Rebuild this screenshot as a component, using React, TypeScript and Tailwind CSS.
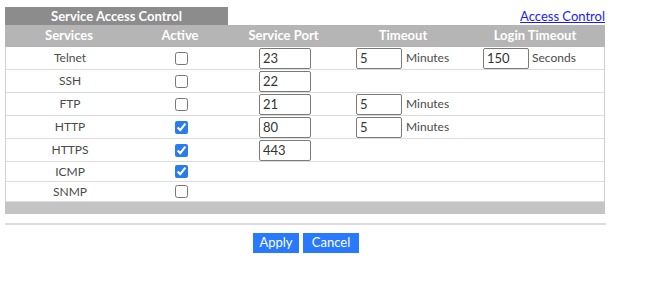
import React from "react";

type Row = {
  name: string;
  active: boolean;
  port?: string;
  timeout?: string;
  login?: string;
  tall: boolean;
};

const ROWS: Row[] = [
  { name: "Telnet", active: false, port: "23", timeout: "5", login: "150", tall: true },
  { name: "SSH", active: false, port: "22", tall: true },
  { name: "FTP", active: false, port: "21", timeout: "5", tall: true },
  { name: "HTTP", active: true, port: "80", timeout: "5", tall: true },
  { name: "HTTPS", active: true, port: "443", tall: true },
  { name: "ICMP", active: true, tall: false },
  { name: "SNMP", active: false, tall: false },
];

const cols = "grid grid-cols-[128px_94px_113px_126px_138px]";

function Field({ value, wide }: { value: string; wide?: boolean }) {
  return (
    <input
      defaultValue={value}
      className={`h-[21px] ${wide ? "w-[52px]" : "w-[46px]"} rounded-[2px] border border-[#7a7a7a] bg-white px-[3px] text-[13px] text-[#333] outline-none`}
    />
  );
}

export default function App() {
  return (
    <div className="w-[645px] h-[284px] bg-white font-['Lato','DejaVu_Sans',sans-serif] text-[12px] text-[#4a4a4a]">
      <div className="ml-[5px] w-[600px] pt-[7px]">
        <div className="flex items-end justify-between">
          <div className="h-[18px] w-[223px] bg-[#8c8c8c] text-center text-[13px] font-bold leading-[18px] text-white">
            Service Access Control
          </div>
          <a href="#" className="mb-[2px] text-[13px] leading-[14px] text-[#1a1aff] underline">
            Access Control
          </a>
        </div>
        <div className={`${cols} h-[22px] items-center bg-[#b5b5b5] text-[13px] font-bold text-white`}>
          <div className="text-center">Services</div>
          <div className="text-center">Active</div>
          <div className="text-center">Service Port</div>
          <div className="text-center">Timeout</div>
          <div className="text-center">Login Timeout</div>
        </div>
        <div className="border-x border-[#d0d0d0]">
          {ROWS.map((r) => (
            <div
              key={r.name}
              className={`${cols} items-center border-b border-[#dcdcdc] ${r.tall ? "h-[23px]" : "h-[20px]"}`}
            >
              <div className="text-center">{r.name}</div>
              <div className="flex justify-center">
                <input
                  type="checkbox"
                  defaultChecked={r.active}
                  className="m-0 h-[13px] w-[13px] accent-[#2b7bf0]"
                />
              </div>
              <div className="pl-[31px]">{r.port && <Field value={r.port} wide />}</div>
              <div className="flex items-center gap-[4px] pl-[15px]">
                {r.timeout && (
                  <>
                    <Field value={r.timeout} />
                    <span className="text-[12px]">Minutes</span>
                  </>
                )}
              </div>
              <div className="flex items-center gap-[3px] pl-[16px]">
                {r.login && (
                  <>
                    <Field value={r.login} />
                    <span className="text-[12px]">Seconds</span>
                  </>
                )}
              </div>
            </div>
          ))}
        </div>
        <div className="h-[12px] bg-[#c4c4c4]" />
        <div className="mt-[9px] h-[2px] w-[601px] bg-[#dcdcdc]" />
        <div className="mt-[8px] flex justify-center gap-[4px] pl-[2px]">
          <button className="h-[20px] w-[46px] bg-[#2979ff] text-[13px] text-white">Apply</button>
          <button className="h-[20px] w-[56px] bg-[#2979ff] text-[13px] text-white">Cancel</button>
        </div>
      </div>
    </div>
  );
}
